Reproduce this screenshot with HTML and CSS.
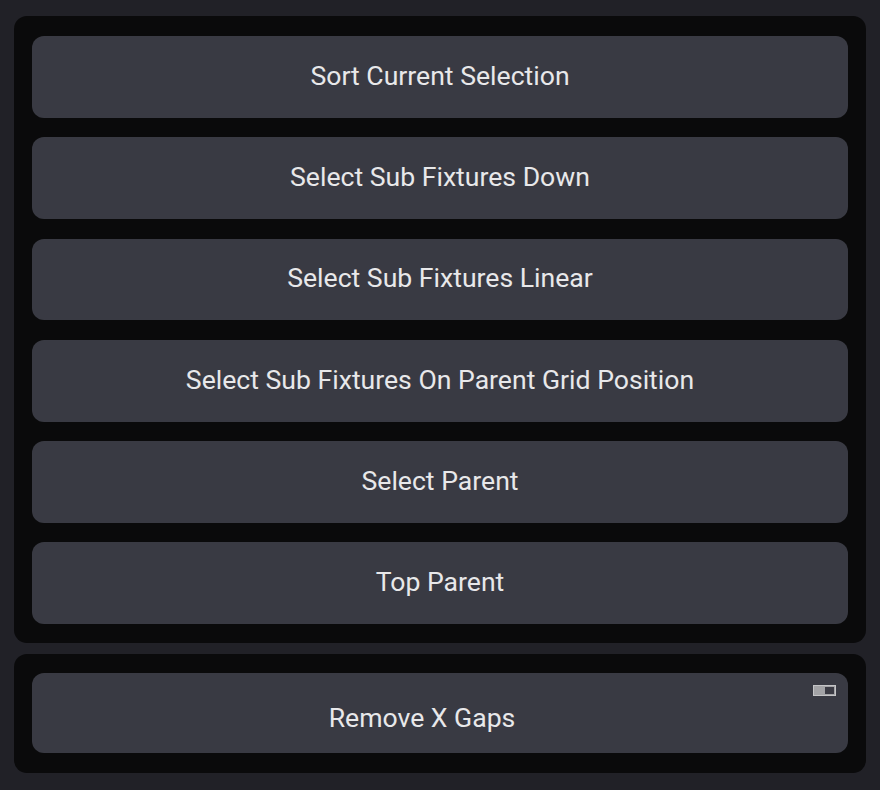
FILE: index.html
```html
<!DOCTYPE html>
<html>
<head>
<meta charset="utf-8">
<link rel="stylesheet" href="styles.css">
</head>
<body>
<div class="page">
  <div class="panel panel-main">
    <div class="btn">Sort Current Selection</div>
    <div class="btn">Select Sub Fixtures Down</div>
    <div class="btn">Select Sub Fixtures Linear</div>
    <div class="btn">Select Sub Fixtures On Parent Grid Position</div>
    <div class="btn">Select Parent</div>
    <div class="btn">Top Parent</div>
  </div>
  <div class="panel panel-extra">
    <div class="btn btn-toggle">Remove X Gaps<span class="toggle"><span class="knob"></span></span></div>
  </div>
</div>
</body>
</html>
```
FILE: styles.css
```css
html, body {
  margin: 0;
  padding: 0;
  background: #212127;
}
.page {
  width: 880px;
  height: 790px;
  box-sizing: border-box;
  padding: 16px 14px 0 14px;
  display: flex;
  flex-direction: column;
  gap: 11px;
  font-family: Roboto, "Liberation Sans", sans-serif;
}
.panel {
  background: #0a0a0b;
  border-radius: 13px;
  display: flex;
  flex-direction: column;
  padding: 20px 18px 19px 18px;
  gap: 19.5px;
}
.panel-extra {
  padding: 19px 18px 20px 18px;
}
.btn {
  position: relative;
  height: 81.75px;
  box-sizing: border-box;
  padding-bottom: 3px;
  border-radius: 12px;
  background: #393a43;
  color: #e8e8ea;
  font-size: 26.6px;
  display: flex;
  align-items: center;
  justify-content: center;
}
.btn-toggle {
  height: 80px;
  padding-top: 9px;
  padding-bottom: 0;
  padding-right: 36px;
}
.toggle {
  position: absolute;
  top: 12px;
  right: 12px;
  width: 23px;
  height: 11px;
  box-sizing: border-box;
  background: #a3a3a6;
  border: 1px solid #c4c4c6;
}
.knob {
  position: absolute;
  right: 1px;
  top: 1px;
  width: 9px;
  height: 7px;
  background: #3b3b44;
}
```
